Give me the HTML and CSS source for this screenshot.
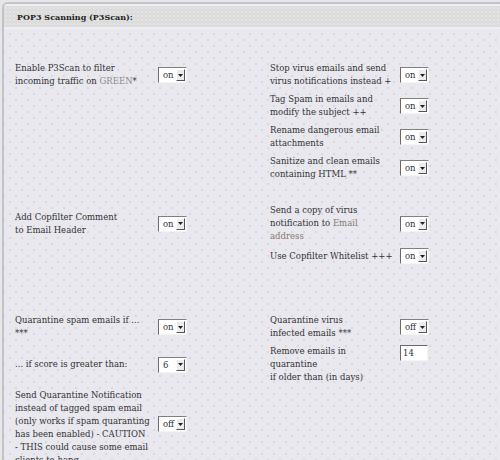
FILE: index.html
```html
<!DOCTYPE html>
<html>
<head>
<meta charset="utf-8">
<link rel="stylesheet" href="styles.css">
</head>
<body>
<div class="panel">
  <div class="head">POP3 Scanning (P3Scan):</div>
  <div class="content">
    <div class="grid s1">
      <div class="lbl">Enable P3Scan to filter<br>incoming traffic on <span class="green">GREEN</span>*</div>
      <div class="cell"><span class="sel"><span class="val">on</span><span class="btn"><svg width="5" height="3" viewBox="0 0 5 3"><path d="M0 0h5L2.5 3z" fill="#222"/></svg></span></span></div>
      <div class="lbl">Stop virus emails and send<br>virus notifications instead +</div>
      <div class="cell"><span class="sel"><span class="val">on</span><span class="btn"><svg width="5" height="3" viewBox="0 0 5 3"><path d="M0 0h5L2.5 3z" fill="#222"/></svg></span></span></div>

      <div></div><div></div>
      <div class="lbl">Tag Spam in emails and<br>modify the subject ++</div>
      <div class="cell"><span class="sel"><span class="val">on</span><span class="btn"><svg width="5" height="3" viewBox="0 0 5 3"><path d="M0 0h5L2.5 3z" fill="#222"/></svg></span></span></div>

      <div></div><div></div>
      <div class="lbl">Rename dangerous email<br>attachments</div>
      <div class="cell"><span class="sel"><span class="val">on</span><span class="btn"><svg width="5" height="3" viewBox="0 0 5 3"><path d="M0 0h5L2.5 3z" fill="#222"/></svg></span></span></div>

      <div></div><div></div>
      <div class="lbl">Sanitize and clean emails<br>containing HTML **</div>
      <div class="cell"><span class="sel"><span class="val">on</span><span class="btn"><svg width="5" height="3" viewBox="0 0 5 3"><path d="M0 0h5L2.5 3z" fill="#222"/></svg></span></span></div>
    </div>

    <div class="grid s2">
      <div class="lbl">Add Copfilter Comment<br>to Email Header</div>
      <div class="cell"><span class="sel"><span class="val">on</span><span class="btn"><svg width="5" height="3" viewBox="0 0 5 3"><path d="M0 0h5L2.5 3z" fill="#222"/></svg></span></span></div>
      <div class="lbl">Send a copy of virus<br>notification to <span class="link">Email<br>address</span></div>
      <div class="cell"><span class="sel"><span class="val">on</span><span class="btn"><svg width="5" height="3" viewBox="0 0 5 3"><path d="M0 0h5L2.5 3z" fill="#222"/></svg></span></span></div>

      <div></div><div></div>
      <div class="lbl">Use Copfilter Whitelist +++</div>
      <div class="cell"><span class="sel"><span class="val">on</span><span class="btn"><svg width="5" height="3" viewBox="0 0 5 3"><path d="M0 0h5L2.5 3z" fill="#222"/></svg></span></span></div>
    </div>

    <div class="grid s3">
      <div class="lbl">Quarantine spam emails if ...<br>***</div>
      <div class="cell"><span class="sel"><span class="val">on</span><span class="btn"><svg width="5" height="3" viewBox="0 0 5 3"><path d="M0 0h5L2.5 3z" fill="#222"/></svg></span></span></div>
      <div class="lbl">Quarantine virus<br>infected emails ***</div>
      <div class="cell"><span class="sel"><span class="val">off</span><span class="btn"><svg width="5" height="3" viewBox="0 0 5 3"><path d="M0 0h5L2.5 3z" fill="#222"/></svg></span></span></div>

      <div class="lbl">... if score is greater than:</div>
      <div class="cell"><span class="sel"><span class="val">6</span><span class="btn"><svg width="5" height="3" viewBox="0 0 5 3"><path d="M0 0h5L2.5 3z" fill="#222"/></svg></span></span></div>
      <div class="lbl">Remove emails in<br>quarantine<br>if older than (in days)</div>
      <div class="cell top"><span class="inp">14</span></div>

      <div class="lbl">Send Quarantine Notification<br>instead of tagged spam email<br>(only works if spam quaranting<br>has been enabled) - CAUTION<br>- THIS could cause some email<br>clients to hang</div>
      <div class="cell"><span class="sel raise"><span class="val">off</span><span class="btn"><svg width="5" height="3" viewBox="0 0 5 3"><path d="M0 0h5L2.5 3z" fill="#222"/></svg></span></span></div>
      <div></div><div></div>
    </div>
  </div>
</div>
</body>
</html>
```

FILE: styles.css
```css
html, body {
  margin: 0;
  padding: 0;
}
body {
  background: #e6e6e8;
  width: 500px;
  height: 460px;
  overflow: hidden;
  font-family: "DejaVu Serif", serif;
  color: #333;
}
.panel {
  margin: 2px 0 0 2px;
  border-left: 2px solid #c2c2c8;
  border-top: 2px solid #c2c2c8;
  border-top-left-radius: 6px;
  overflow: hidden;
  height: 470px;
  background-color: #e9e8ee;
  background-image:
    radial-gradient(circle, #d9d8de 0.8px, transparent 1.1px),
    radial-gradient(circle, #d9d8de 0.8px, transparent 1.1px);
  background-size: 12px 12px;
  background-position: 0 0, 6px 6px;
}
.head {
  height: 21px;
  border-top: 2px solid #efefef;
  border-bottom: 2px solid #efeff2;
  padding-left: 13px;
  display: flex;
  align-items: center;
  font-weight: bold;
  font-size: 8px;
  color: #222;
  background-color: #dcdcdc;
  background-image: radial-gradient(circle, #e8e8e8 0.6px, transparent 0.9px);
  background-size: 4px 4px;
}
.content {
  padding: 33px 0 0 11px;
}
.grid {
  display: grid;
  grid-template-columns: 143px 112px 130px 60px;
  row-gap: 5px;
  align-items: center;
  font-size: 8.5px;
  line-height: 13px;
}
.s2 { margin-top: 23px; }
.s3 { margin-top: 50px; }
.lbl { white-space: nowrap; }
.green { color: #8c8c8c; }
.link { color: #857a72; }
.cell { display: flex; align-items: center; }
.cell.top { align-self: start; }
.sel {
  display: inline-flex;
  align-items: center;
  box-sizing: border-box;
  width: 29px;
  height: 16px;
  background: #fff;
  border: 1px solid;
  border-color: #808080 #f4f4f4 #f4f4f4 #6a6a6a;
}
.sel.raise { margin-bottom: 8px; }
.val {
  flex: 1;
  padding-left: 4px;
  font-size: 8.5px;
  line-height: 12px;
  color: #333;
}
.btn {
  box-sizing: border-box;
  width: 9px;
  height: 12px;
  margin-right: 1px;
  background: #ececec;
  border-right: 1px solid #555;
  border-bottom: 1px solid #555;
  border-top: 1px solid #fff;
  border-left: 1px solid #fff;
  display: flex;
  align-items: center;
  justify-content: center;
}
.inp {
  display: inline-block;
  box-sizing: border-box;
  width: 28px;
  height: 16px;
  background: #fff;
  border: 1px solid;
  border-color: #6a6a6a #f4f4f4 #f4f4f4 #6a6a6a;
  padding-left: 2px;
  font-size: 8.5px;
  line-height: 14px;
  color: #333;
}
```
